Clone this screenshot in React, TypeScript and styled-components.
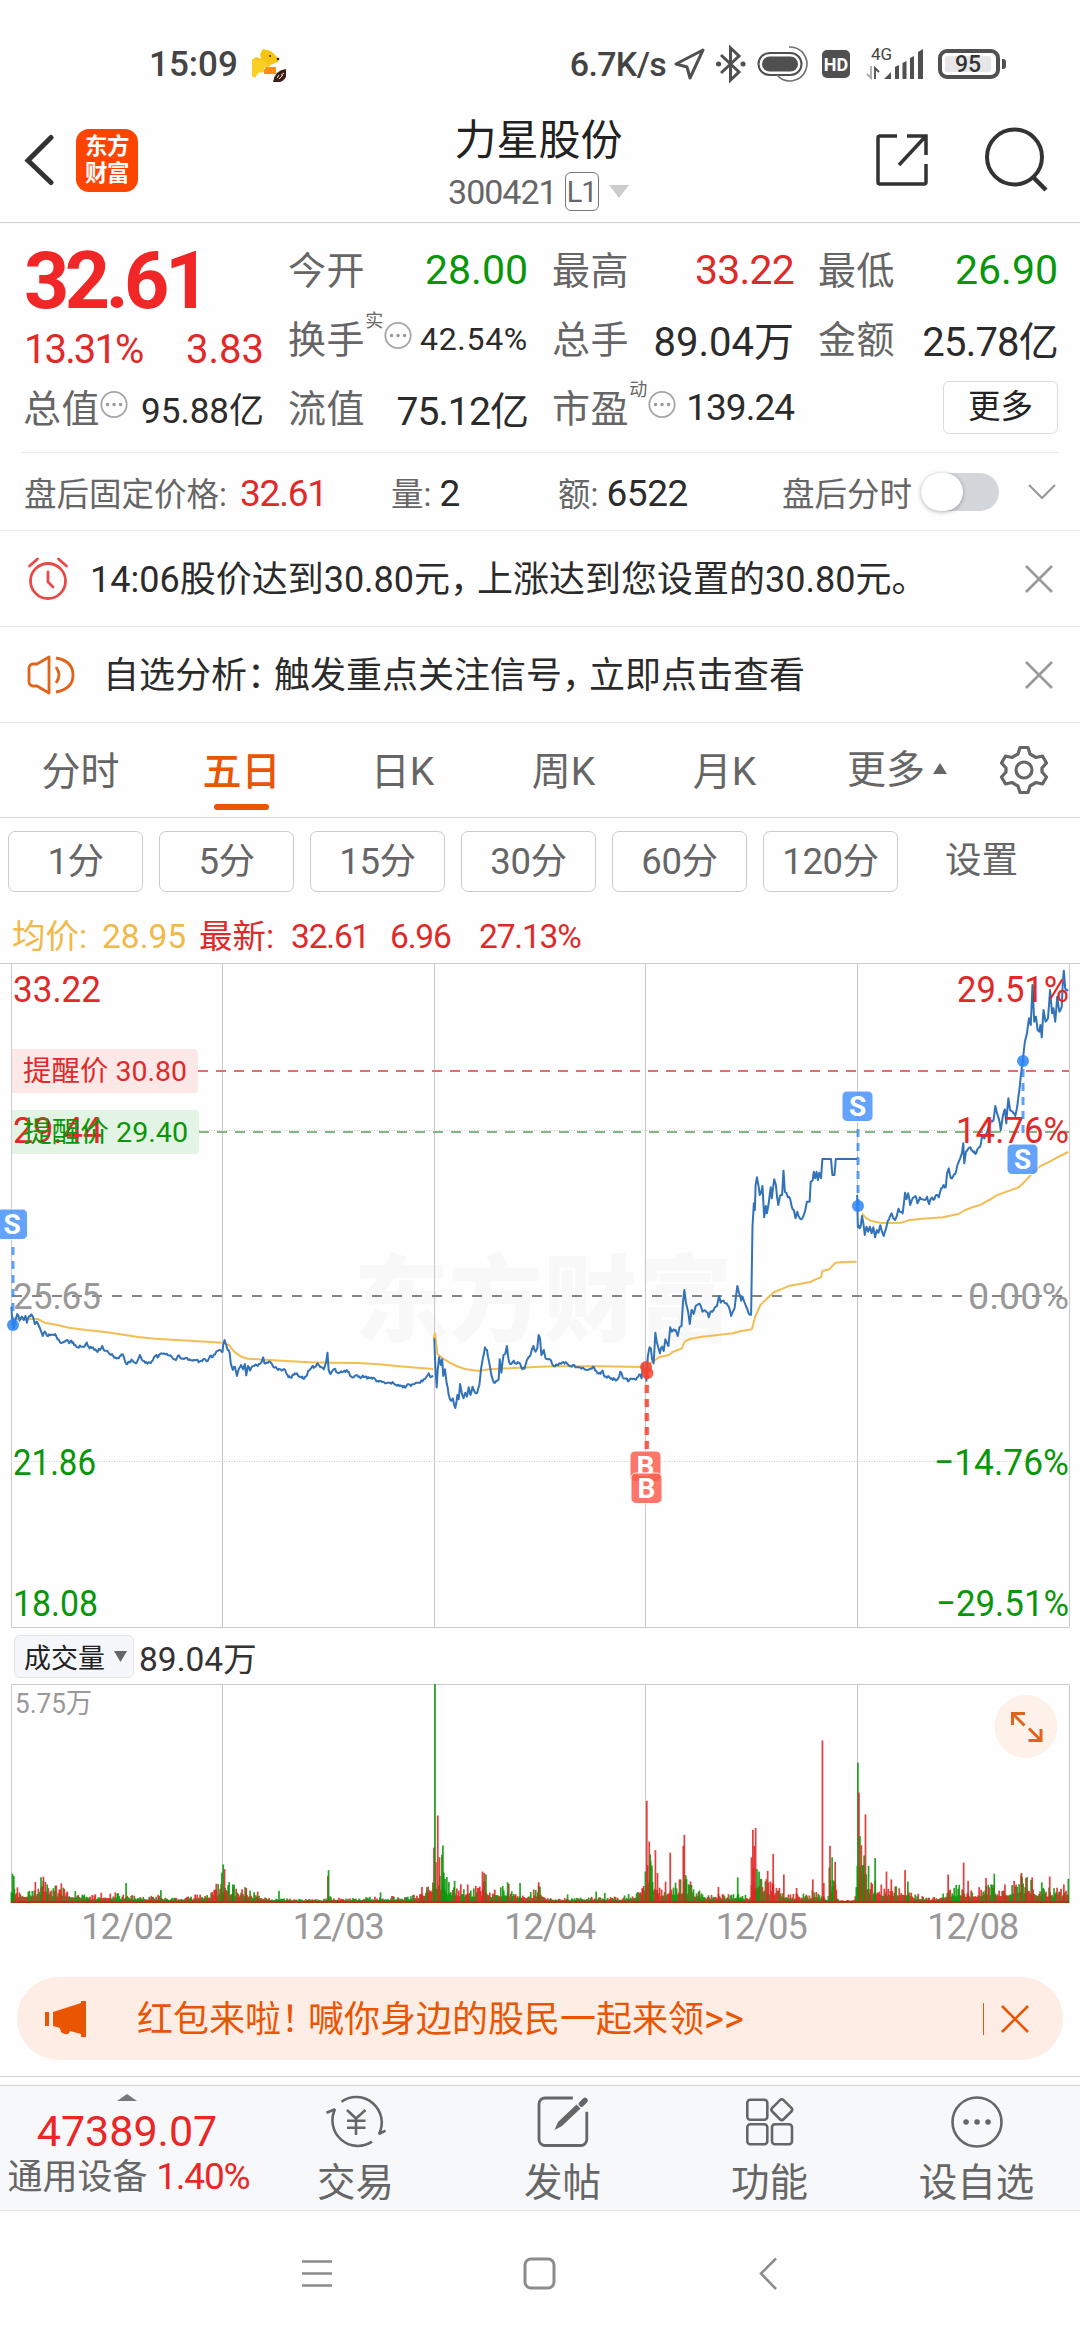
import React from "react";
import styled, { createGlobalStyle } from "styled-components";

type Pt = [number, number];
type Spike = [number, number, "r" | "g"];

const RED = "#e02a2a";
const GREEN = "#0a960a";
const ORANGE = "#ea5504";
const FONT = `Roboto, "Noto Sans CJK SC", sans-serif`;

// "x,y x,y" -> [[x, y], ...]
const parse = (s: string): Pt[] =>
  s
    .trim()
    .split(/\s+/)
    .map((p) => p.split(",").map(Number) as Pt);

const random = (seed: number) => () => {
  seed = (seed * 16807) % 2147483647;
  return seed / 2147483647;
};

// one chart unit is 1/2.904 px across and 1/3 px down, HALF is the middle of the chart
const HALF = 1568;
const shift = (pts: Pt[]): Pt[] => pts.map(([x, y]) => [x + HALF, y]);

const PRICE_DAYS: Pt[][] = [
  parse(`33,1070 35,1105 40,1135 45,1110 50,1092 57,1112 63,1100 69,1110 74,1098 78,1118 85,1098 91,1093 97,1104 101,1122 107,1115 113,1128 118,1140 124,1158 130,1145 136,1157 145,1156 152,1154 160,1152 167,1168 175,1178 185,1176 195,1170 201,1180 207,1172 215,1185 225,1192 235,1190 245,1190 252,1178 260,1195 270,1192 280,1203 290,1200 297,1188 305,1202 315,1208 325,1212 335,1222 345,1225 353,1213 360,1222 367,1242 375,1235 385,1232 392,1238 398,1235 406,1215 415,1232 425,1236 435,1238 443,1232 452,1218 460,1220 468,1210 478,1212 488,1216 498,1220 505,1228 513,1226 520,1216 530,1225 540,1224 550,1228 560,1232 570,1230 580,1234 590,1228 600,1234 610,1218 618,1220 628,1205 636,1200 645,1208`),
  parse(`646,1208 648,1185 652,1170 657,1185 661,1200 667,1210 670,1240 676,1260 682,1250 688,1278 694,1255 700,1245 706,1258 711,1242 715,1276 720,1248 726,1262 735,1248 745,1245 755,1242 760,1235 764,1222 768,1240 778,1238 788,1240 797,1253 807,1260 818,1262 828,1260 835,1275 843,1282 853,1275 862,1270 872,1280 880,1285 888,1280 895,1262 905,1252 914,1250 922,1240 930,1252 940,1258 947,1235 951,1208 954,1258 960,1272 966,1262 973,1256 980,1268 990,1264 1000,1262 1010,1265 1020,1280 1030,1278 1040,1280 1050,1282 1060,1280 1075,1284 1090,1288 1100,1295 1110,1296 1125,1298 1133,1298 1140,1296 1150,1304 1160,1308 1170,1312 1180,1308 1190,1304 1200,1303 1210,1298 1220,1298 1230,1288 1240,1278 1245,1270 1250,1282 1258,1278`),
  [
    ...parse(`1261,1165 1264,1250 1268,1312 1271,1260 1275,1222 1280,1245 1284,1228 1287,1278 1292,1258 1297,1300 1303,1335 1309,1352 1315,1345 1322,1374 1328,1335 1332,1348 1336,1302 1341,1330 1346,1345 1351,1328 1356,1340 1361,1312 1366,1335 1372,1310 1378,1325 1386,1328 1392,1305 1397,1255 1402,1225 1408,1192 1414,1200 1420,1235 1427,1275 1434,1298 1441,1292 1448,1288 1451,1228 1456,1268 1462,1215 1467,1212 1472,1188 1478,1235 1485,1242 1492,1232 1500,1242 1507,1238 1514,1254 1523,1256 1530,1230 1538,1220 1544,1200 1549,1188 1555,1205 1560,1195 1564,1155`),
    ...shift(parse(`0,1165 4,1215 11,1200 16,1225 24,1228 32,1232 40,1248 50,1245 58,1240 68,1236 78,1240 86,1248 95,1245 103,1252 115,1252 130,1258 145,1256 157,1252 167,1270 175,1272 182,1262 188,1280 198,1278 208,1285 220,1292 227,1285 233,1265 240,1282 250,1286 258,1292 266,1286 275,1287 285,1280 292,1275 295,1285 300,1240`)),
  ],
  shift(parse(`307,1265 309,1292 313,1220 318,1192 322,1195 325,1225 330,1240 335,1148 339,1175 344,1195 348,1210 354,1190 359,1203 364,1168 369,1180 373,1188 378,1132 383,1145 388,1138 394,1140 400,1158 405,1132 411,1128 415,1060 419,1020 424,1060 430,1085 435,1122 440,1080 446,1092 452,1068 460,1062 467,1068 472,1085 480,1082 487,1088 490,1102 495,1085 503,1082 508,1072 514,1068 520,1038 525,1058 533,1052 542,1060 548,1070 555,1098 560,1085 565,1075 569,1040 573,1008 578,1030 584,1052 588,1040 593,1055 598,1068 603,1080 609,1094 613,1094 615,960 617,830 621,760 624,780 626,705 630,682 635,710 638,735 642,728 646,708 651,802 656,768 659,790 664,760 670,712 673,745 676,720 680,688 685,705 688,738 692,765 697,738 703,735 707,662 711,725 716,730 720,742 726,745 731,770 737,780 742,805 747,785 753,802 759,808 765,798 770,782 775,755 783,755 786,695 792,690 795,665 799,685 803,665 807,690 811,668 816,685 820,627 845,627 849,675 855,675 859,627 921,627`)),
  shift(parse(`921,735 923,832 931,830 935,798 939,820 943,855 948,830 953,845 958,830 963,850 968,832 973,862 978,840 983,848 988,826 993,845 998,858 1005,835 1010,812 1016,800 1021,790 1026,805 1031,810 1036,798 1041,776 1047,785 1053,790 1060,728 1064,748 1069,730 1075,765 1080,750 1086,742 1090,738 1096,760 1103,742 1110,748 1118,750 1124,740 1130,762 1136,745 1145,748 1152,735 1158,742 1165,715 1172,705 1178,712 1182,670 1187,655 1193,685 1200,678 1208,665 1214,640 1220,625 1225,610 1229,580 1232,640 1237,605 1244,595 1250,592 1256,602 1264,612 1270,598 1278,590 1284,555 1290,565 1297,548 1303,530 1309,515 1317,510 1322,468 1327,490 1332,505 1338,540 1344,498 1350,478 1354,520 1360,445 1365,480 1372,485 1380,498 1386,468 1392,420 1397,370 1402,330 1408,275 1414,250 1420,205 1425,225 1430,105 1435,215 1440,200 1445,240 1450,245 1453,225 1457,262 1462,180 1468,215 1475,205 1481,120 1487,190 1491,175 1496,215 1502,140 1508,185 1515,170 1518,100 1521,62 1525,115 1533,123`)),
];

const AVERAGE_DAYS: Pt[][] = [
  parse(`38,1108 60,1106 110,1107 130,1118 170,1126 200,1133 250,1140 300,1145 350,1153 400,1161 450,1166 500,1169 550,1172 600,1175 645,1178`),
  parse(`650,1180 665,1185 680,1205 700,1220 720,1226 770,1229 830,1233 900,1237 960,1238 1040,1239 1100,1243 1160,1249 1220,1254 1258,1257`),
  [
    ...parse(`1259,1165 1263,1150 1268,1190 1270,1212 1285,1225 1305,1237 1325,1248 1350,1257 1390,1263 1420,1258 1480,1255 1568,1250`),
    ...shift(parse(`52,1249 180,1249 300,1251`)),
  ],
  shift(parse(`313,1252 325,1235 335,1230 345,1222 375,1215 385,1206 412,1195 420,1175 435,1167 470,1160 510,1156 560,1150 580,1144 615,1138 625,1100 640,1065 660,1045 680,1026 705,1016 725,1007 785,996 800,988 816,982 820,963 840,958 858,938 880,936 919,935`)),
  shift(parse(`935,790 945,803 960,812 990,819 1050,818 1070,811 1110,806 1170,802 1190,797 1215,792 1235,780 1260,770 1280,764 1310,747 1325,736 1355,725 1390,712 1410,692 1425,675 1450,650 1480,635 1510,618 1534,606`)),
];

// per-minute ticks between the known points
const ticks = (pts: Pt[], seed: number): string => {
  const rnd = random(seed);
  const out: string[] = [];
  pts.forEach(([x, y], i) => {
    out.push(`${x},${y}`);
    const next = pts[i + 1];
    if (!next || next[1] === y) return;
    const n = Math.floor((next[0] - x) / 2.6);
    for (let k = 1; k < n; k++) {
      const t = k / n;
      const py = y + (next[1] - y) * t + (rnd() - 0.5) * 9;
      out.push(`${(x + (next[0] - x) * t).toFixed(1)},${py.toFixed(1)}`);
    }
  });
  return out.join(" ");
};

const VOLUME_BASE: Pt[] = [
  ...parse(`33,80 50,38 80,40 120,60 150,42 180,48 220,30 260,15 300,28 340,25 366,18 420,15 460,18 480,12 530,10 580,22 620,38 640,50 655,70 670,50 715,38 750,22 800,10 860,8 940,7 960,15 1000,8 1090,14 1150,15 1200,18 1245,46 1260,110 1285,100 1300,60 1340,45 1380,40 1410,60 1430,30 1470,50 1500,35 1540,25 1564,50`),
  ...shift(parse(`4,30 20,14 80,10 180,14 240,14 280,30 305,50 315,130 330,80 350,45 380,60 400,48 420,80 440,50 480,18 520,20 570,25 610,15 615,130 640,80 670,60 700,35 740,22 780,20 800,40 815,22 835,8 840,100 860,40 868,5 915,5 921,200 935,110 960,60 1000,45 1060,55 1090,25 1130,12 1180,28 1220,50 1260,30 1300,60 1350,40 1400,80 1440,45 1480,40 1520,45 1534,60`)),
];

const SPIKES: Spike[] = [
  [36, 82, "g"], [40, 76, "g"], [119, 72, "g"], [126, 74, "r"], [137, 52, "g"], [178, 55, "r"],
  [366, 56, "g"], [467, 36, "g"], [628, 54, "r"], [644, 85, "g"], [648, 108, "g"], [652, 95, "r"],
  [676, 52, "g"], [715, 42, "r"], [748, 32, "r"], [810, 34, "g"], [952, 76, "r"], [954, 92, "g"],
  [1105, 30, "g"], [1225, 45, "r"], [1243, 46, "r"], [1260, 155, "r"], [1271, 245, "r"],
  [1276, 128, "r"], [1283, 135, "g"], [1286, 161, "g"], [1292, 68, "g"], [1320, 62, "g"],
  [1358, 52, "r"], [1401, 88, "r"], [1406, 84, "r"], [1411, 80, "g"], [1474, 58, "g"],
  [1510, 56, "g"], [1564, 58, "r"], [1263, 613, "g"],
  ...([
    [0, 45, "g"], [80, 24, "g"], [163, 32, "g"], [188, 28, "g"], [297, 42, "r"], [306, 88, "g"],
    [310, 286, "r"], [317, 172, "r"], [320, 136, "g"], [325, 105, "g"], [335, 148, "r"],
    [341, 84, "r"], [378, 141, "r"], [405, 66, "r"], [416, 160, "r"], [419, 191, "r"],
    [423, 78, "g"], [463, 35, "g"], [518, 45, "r"], [574, 72, "g"], [614, 128, "r"],
    [618, 205, "r"], [622, 160, "r"], [626, 210, "r"], [630, 95, "g"], [636, 88, "g"],
    [661, 90, "r"], [677, 137, "r"], [708, 80, "r"], [745, 42, "r"], [792, 66, "r"],
    [820, 455, "r"], [824, 56, "r"], [842, 160, "r"], [848, 128, "g"], [857, 115, "r"],
    [923, 393, "g"], [926, 309, "r"], [929, 187, "g"], [933, 162, "r"], [937, 105, "g"],
    [941, 133, "g"], [945, 248, "r"], [954, 104, "g"], [973, 126, "g"], [1006, 88, "r"],
    [1020, 66, "r"], [1060, 92, "r"], [1068, 60, "g"], [1185, 80, "r"], [1230, 113, "r"],
    [1243, 62, "r"], [1295, 70, "r"], [1319, 82, "g"], [1350, 52, "r"], [1398, 84, "r"],
    [1411, 70, "r"], [1429, 72, "r"], [1457, 58, "g"], [1480, 74, "r"], [1521, 52, "r"],
    [1534, 68, "g"],
  ] as Spike[]).map(([x, h, c]) => [x + HALF, h, c] as Spike),
];

const volumeBars = (): Spike[] => {
  const rnd = random(77);
  const bars: Spike[] = [];
  let i = 0;
  for (let x = 33; x < 3103; x += 2.9) {
    while (i < VOLUME_BASE.length - 2 && VOLUME_BASE[i + 1][0] < x) i++;
    const [x0, h0] = VOLUME_BASE[i];
    const [x1, h1] = VOLUME_BASE[i + 1];
    const base = h0 + ((h1 - h0) * (x - x0)) / (x1 - x0);
    const r = rnd();
    bars.push([x, 4 + base * (0.32 + r * r * 0.75), rnd() > 0.5 ? "r" : "g"]);
  }
  return [...bars, ...SPIKES];
};

const DAY_LINES = [222.5, 434.5, 645.5, 857.5];

const PriceChart = () => (
  <ChartSvg width="1080" height="665" viewBox="0 0 1080 665">
    <text x="354" y="371" fontSize="94" fontWeight="900" fill="#f8f8f8" textLength="378">
      东方财富
    </text>
    <path d="M0 .5H1080M11.5 0V664.5H1069.5V0" stroke="#ccc" fill="none" />
    {DAY_LINES.map((x) => (
      <path key={x} d={`M${x} 1V664`} stroke="#c8c8c8" />
    ))}
    <path d="M14 167.5H1069M14 498.5H1069" stroke="#ccc" strokeDasharray="1 1.5" />
    <path d="M198 108H1069" stroke="#e07070" strokeWidth="1.8" strokeDasharray="10 8" />
    <path d="M199 169H1069" stroke="#84b784" strokeWidth="1.8" strokeDasharray="10 8" />
    <path d="M12 333H1069" stroke="#858585" strokeWidth="1.8" strokeDasharray="10 10" />
    <path d="M12 86H194a4 4 0 0 1 4 4V126a4 4 0 0 1-4 4H12z" fill="#fde8e8" />
    <path d="M12 147H195a4 4 0 0 1 4 4V187a4 4 0 0 1-4 4H12z" fill="#e4f4e4" />
    <svg width="1080" height="650" viewBox="0 39 3136 1950" preserveAspectRatio="none">
      {AVERAGE_DAYS.map((d, i) => (
        <Trace key={i} points={d.join(" ")} stroke="#f2bd53" />
      ))}
      {PRICE_DAYS.map((d, i) => (
        <Trace key={i} points={ticks(d, 11 + i)} stroke="#3272b8" />
      ))}
    </svg>
    <AxisLabel x="13" y="39" size={37} w={88} fill={RED}>33.22</AxisLabel>
    <AxisLabel x="13" y="180" size={37} w={90} fill={RED}>29.44</AxisLabel>
    <AxisLabel x="13" y="346" size={37} w={88} fill="#999">25.65</AxisLabel>
    <AxisLabel x="13" y="512" size={37} w={83} fill={GREEN}>21.86</AxisLabel>
    <AxisLabel x="13" y="653" size={37} w={85} fill={GREEN}>18.08</AxisLabel>
    <AxisLabel x="957" y="39" size={37} w={112} fill={RED}>29.51%</AxisLabel>
    <AxisLabel x="956" y="180" size={37} w={113} fill={RED}>14.76%</AxisLabel>
    <AxisLabel x="968" y="346" size={37} w={101} fill="#999">0.00%</AxisLabel>
    <AxisLabel x="934" y="512" size={37} w={135} fill={GREEN}>−14.76%</AxisLabel>
    <AxisLabel x="936" y="653" size={37} w={133} fill={GREEN}>−29.51%</AxisLabel>
    <AxisLabel x="23" y="117.5" size={28} w={164} fill={RED}>提醒价 30.80</AxisLabel>
    <AxisLabel x="23" y="178.5" size={28} w={165} fill={GREEN}>提醒价 29.40</AxisLabel>

    <Marker letter="S" x={12} top={246} dotX={13} dotY={362} />
    <Marker letter="S" x={857.5} top={128} dotX={858} dotY={243} />
    <Marker letter="S" x={1022.5} top={181} dotX={1023} dotY={98} />
    <Marker letter="B" x={645.5} top={488} dotX={646} dotY={404} />
    <Marker letter="B" x={646.5} top={510} dotX={647.5} dotY={410} />
  </ChartSvg>
);

const AxisLabel = (p: { x: string; y: string; size: number; w: number; fill: string; children: string }) => (
  <text x={p.x} y={p.y} fontSize={p.size} fill={p.fill} textLength={p.w} lengthAdjust="spacingAndGlyphs">
    {p.children}
  </text>
);

const Marker = (p: { letter: string; x: number; top: number; dotX: number; dotY: number }) => {
  const sell = p.letter === "S";
  const color = sell ? "#2b83f6" : "#f5432f";
  const fill = sell ? "#4a94fb" : "#ff5f50";
  const from = p.dotY > p.top ? p.top + 38 : p.top - 11;
  return (
    <g>
      <path
        d={`M${p.dotX} ${sell ? from : 486}V${p.dotY}`}
        stroke={color}
        strokeWidth="3"
        strokeDasharray="8 6"
        opacity=".75"
      />
      <circle cx={p.dotX} cy={p.dotY} r="6" fill={color} opacity=".85" />
      <rect x={p.x - 15.5} y={p.top} width="31" height="30.5" rx="5" fill={fill} stroke="#fff" opacity=".85" />
      <text x={p.x} y={p.top + 25} fontSize="28" fontWeight="700" fill="#fff" textAnchor="middle">
        {p.letter}
      </text>
    </g>
  );
};

const VolumeChart = () => (
  <ChartSvg width="1080" height="219" viewBox="0 0 1080 219">
    <path d="M11.5 219V.5H1069.5V219" stroke="#ccc" fill="none" />
    {DAY_LINES.map((x) => (
      <path key={x} d={`M${x} 1V219`} stroke="#c8c8c8" />
    ))}
    <svg width="1080" height="219" viewBox="0 0 3136 613" preserveAspectRatio="none">
      {volumeBars().map(([x, h, c], i) => (
        <rect key={i} x={x - 2.4} y={613 - h} width="5" height={h} fill={c === "r" ? "#e02424" : "#0a960a"} opacity=".88" />
      ))}
    </svg>
    <path d="M11 218H1069" stroke="#b0350f" strokeWidth="2" />
    <text x="15" y="29" fontSize="28" fill="#999" textLength="77" lengthAdjust="spacingAndGlyphs">
      5.75万
    </text>
    <circle cx="1026" cy="42.500" r="31.500" fill="#fef1ea" />
    <path d="M1012.500 41V29.500H1025M1013 30l11.500 11.500M1041 45V56.500H1028.500M1040.500 56L1029 44.500" stroke="#e2641c" strokeWidth="3" fill="none" />
  </ChartSvg>
);

const Dots = () => (
  <svg width="28" height="29" viewBox="0 0 28 29">
    <circle cx="14" cy="14.500" r="12.700" fill="none" stroke="#a6a6a6" strokeWidth="1.800" />
    <path d="M7.500 14.500h.1M14 14.500h.1M20.500 14.500h.1" stroke="#999" strokeWidth="3.400" strokeLinecap="round" />
  </svg>
);

const Close = ({ color = "#999" }: { color?: string }) => (
  <svg width="30" height="30" viewBox="0 0 30 30">
    <path d="M2 2L28 28M28 2L2 28" stroke={color} strokeWidth="2.600" />
  </svg>
);

const StatusBar = () => (
  <Status>
    <Clock>15:09</Clock>
    <svg width="34" height="35" viewBox="0 0 34 35">
      <path d="M8 7l3-5 8 2 8 8-1 3-8 3H8L0 13l4-3 5 2z" fill="#f6c512" />
      <path d="M0 12l12 2 7 5-7 2v4l-6 1-3 5-3-2z" fill="#f9cf25" />
      <path d="M14 20h10v7H12v-4z" fill="#fb8c14" />
      <circle cx="26" cy="12" r="1.300" fill="#222" />
      <path d="M17 9h2" stroke="#333" strokeWidth="1.500" />
      <path d="M21 35q2-12 13-13v8q-3 5-7 5z" fill="#3d1d16" />
      <path d="M25 31l2-3M29 28l3-2M27 32l4-4" stroke="#eee" />
    </svg>
    <Speed>6.7K/s</Speed>
    <svg width="31" height="32" viewBox="0 0 31 32">
      <path d="M29 2L2 16l11 3 3 11z" fill="none" stroke="#505050" strokeWidth="3" strokeLinejoin="round" />
    </svg>
    <StatusIcon $left={11} width="30" height="36" viewBox="0 0 30 36">
      <path d="M5 9l18 17-8.500 8V2L23 10 5 27" fill="none" stroke="#505050" strokeWidth="3" />
      <path d="M2.500 18h.1M27 18h.1" stroke="#505050" strokeWidth="5" strokeLinecap="round" />
    </StatusIcon>
    <StatusIcon $left={11} width="50" height="38" viewBox="0 0 50 38">
      <rect x="1.500" y="8" width="43" height="22" rx="11" fill="none" stroke="#505050" strokeWidth="2" />
      <rect x="5" y="11.500" width="36" height="15" rx="7.500" fill="#505050" />
      <path d="M32 2a17 17 0 1 1-12 28q5 6 13 6" fill="none" stroke="#707070" strokeWidth="1.600" />
    </StatusIcon>
    <Hd>HD</Hd>
    <StatusIcon $left={16} width="58" height="36" viewBox="0 0 58 36">
      <text x="5" y="14" fontSize="17" fill="#444" textLength="21">4G</text>
      <path d="M5 20v12l-4-4" stroke="#aaa" strokeWidth="1.800" fill="none" />
      <path d="M9 33V22l4 4" stroke="#505050" strokeWidth="1.800" fill="none" />
      <path d="M18 33l7-7v7zM29 21l4-2v14h-4zM36.500 17l4-2v18h-4zM44 12l4-2v23h-4zM52 6l5-3v30h-5z" fill="#505050" />
    </StatusIcon>
    <Battery>
      <i>95</i>
    </Battery>
  </Status>
);

const tabs = ["分时", "五日", "日K", "周K", "月K"];
const periods = ["1分", "5分", "15分", "30分", "60分", "120分"];
const dates = ["12/02", "12/03", "12/04", "12/05", "12/08"];

export default function App() {
  return (
    <Page>
      <GlobalStyle />
      <StatusBar />

      <Header>
        <svg width="32" height="52" viewBox="0 0 32 52">
          <path d="M27 3.500L4 26.500 27 48.500" fill="none" stroke="#333" strokeWidth="5" strokeLinecap="round" />
        </svg>
        <Logo>
          <span>东方</span>
          <span>财富</span>
        </Logo>
        <TitleBox>
          <Name>力星股份</Name>
          <Code>
            300421<Level>L1</Level>
            <svg width="20" height="13" viewBox="0 0 20 13">
              <path d="M0 0H20L10 13z" fill="#ccc" />
            </svg>
          </Code>
        </TitleBox>
        <svg width="54" height="54" viewBox="0 0 54 54" fill="none" stroke="#333" strokeWidth="3.500">
          <path d="M22 3H5a2 2 0 0 0-2 2V49a2 2 0 0 0 2 2H49a2 2 0 0 0 2-2V31M32 3H51V22M50 4L24 32" />
        </svg>
        <SearchIcon width="64" height="66" viewBox="0 0 64 66" fill="none" stroke="#333" strokeWidth="4">
          <ellipse cx="29.500" cy="30" rx="27.500" ry="27.500" />
          <path d="M48 50L61 63" strokeWidth="4.500" />
        </SearchIcon>
      </Header>

      <Quote>
        <Main>
          <Price>32.61</Price>
          <Change>
            <span>13.31%</span>
            <Value $c={RED} $size={40}>3.83</Value>
          </Change>
        </Main>
        <Cell><Label>今开</Label><Value $c={GREEN}>28.00</Value></Cell>
        <Cell><Label>最高</Label><Value $c={RED} $ls={-0.8}>33.22</Value></Cell>
        <Cell><Label>最低</Label><Value $c={GREEN}>26.90</Value></Cell>
        <Cell>
          <Label>换手<Sup>实</Sup><Dots /></Label>
          <Value $size={32} $ls={0.7}>42.54%</Value>
        </Cell>
        <Cell><Label>总手</Label><Value $size={40}>89.04万</Value></Cell>
        <Cell><Label>金额</Label><Value $size={40} $ls={-0.8}>25.78亿</Value></Cell>
        <Cell>
          <Label>总值<Dots /></Label>
          <Value $size={35}>95.88亿</Value>
        </Cell>
        <Cell><Label>流值</Label><Value $size={39} $ls={-0.9}>75.12亿</Value></Cell>
        <Cell>
          <Label>市盈<Sup>动</Sup><Dots /></Label>
          <Value $size={37} $ls={-1}>139.24</Value>
        </Cell>
        <Cell><More>更多</More></Cell>
      </Quote>

      <AfterHours>
        <Fixed>盘后固定价格: <Value $c={RED} $size={37} $ls={-1.2}>32.61</Value></Fixed>
        <span>量: <Value $size={37}>2</Value></span>
        <span>额: <Value $size={37} $ls={-0.4}>6522</Value></span>
        <span>盘后分时</span>
        <Switch />
        <svg width="28" height="18" viewBox="0 0 28 18">
          <path d="M1 2L14 15 27 2" fill="none" stroke="#999" strokeWidth="2.200" />
        </svg>
      </AfterHours>

      <Notice>
        <svg width="42" height="44" viewBox="0 0 42 44" fill="none" stroke="#e84a4a" strokeWidth="2.800" strokeLinecap="round">
          <circle cx="21" cy="24" r="17.500" />
          <path d="M21 15v10l5 5M2.500 9l8-7M39.500 9l-8-7" />
        </svg>
        <NoticeText $left={21}>14:06股价达到30.80元<Mark>，</Mark>上涨达到您设置的30.80元。</NoticeText>
        <Close />
      </Notice>
      <Notice>
        <svg width="48" height="40" viewBox="0 0 48 40" fill="none" stroke="#e0651c" strokeWidth="2.800" strokeLinejoin="round">
          <path d="M10 9L22 2V38L10 31H6a4 4 0 0 1-4-4V13a4 4 0 0 1 4-4zM22 2V38" />
          <path d="M29 12q6 8 0 16M29 3q17 3 17 17T29 37" />
        </svg>
        <NoticeText $left={28}>自选分析<Mark>：</Mark>触发重点关注信号<Mark>，</Mark>立即点击查看</NoticeText>
        <Close />
      </Notice>

      <Tabs>
        {tabs.map((t) => (
          <Tab key={t} $active={t === "五日"}>{t}</Tab>
        ))}
        <MoreTab>
          更多
          <svg width="14" height="11" viewBox="0 0 14 11">
            <path d="M7 0L14 11H0z" fill="#666" />
          </svg>
        </MoreTab>
        <svg width="50" height="50" viewBox="0 0 50 50" fill="none" stroke="#666" strokeWidth="3.200" strokeLinejoin="round">
          <path d="M21 2.500h8l2 6.500 6 3.500 6.500-1.500 4 7-4.500 5v4l4.500 5-4 7-6.500-1.500-6 3.500-2 6.500h-8l-2-6.500-6-3.500-6.500 1.500-4-7 4.500-5v-4l-4.500-5 4-7 6.500 1.500 6-3.500z" />
          <circle cx="25" cy="25" r="8" />
        </svg>
      </Tabs>

      <Periods>
        {periods.map((p) => (
          <Period key={p}>{p}</Period>
        ))}
        <Setup>设置</Setup>
      </Periods>

      <Legend>
        <Amber>均价:</Amber>
        <Amber>28.95</Amber>
        <span>最新:</span>
        <Tight>32.61</Tight>
        <Tight>6.96</Tight>
        <Tight>27.13%</Tight>
      </Legend>

      <PriceChart />
      <VolumeHead>
        <Select>
          成交量
          <svg width="13" height="11" viewBox="0 0 13 11">
            <path d="M0 0H13L6.500 11z" fill="#666" />
          </svg>
        </Select>
        89.04万
      </VolumeHead>
      <VolumeChart />
      <Dates>
        {dates.map((d) => (
          <span key={d}>{d}</span>
        ))}
      </Dates>

      <Banner>
        <svg width="42" height="38" viewBox="0 0 42 38" fill={ORANGE}>
          <path d="M0 12h4v14H0zM8 12L36 3V1h5V37h-5v-3l-11-3q-1 4-5 3l-3-1q-2-2-2-5l-7-2z" />
        </svg>
        <BannerText>红包来啦<Mark>！</Mark>喊你身边的股民一起来领<b>&gt;&gt;</b></BannerText>
        <Divider />
        <Close color={ORANGE} />
      </Banner>

      <BottomBar>
        <Sector>
          <svg width="20" height="7" viewBox="0 0 20 7">
            <path d="M10 0L20 7H0z" fill="#777" />
          </svg>
          <IndexValue>47389.07</IndexValue>
          <SectorName>通用设备 <b>1.40%</b></SectorName>
        </Sector>
        <Action>
          <svg width="62" height="56" viewBox="0 0 62 56" fill="none" stroke="#666" strokeWidth="2.600">
            <path d="M16.500 8.700A25.500 25.500 0 0 1 54 41l6.500-3.300M47 48.700A25.500 25.500 0 0 1 10 16.300l-8.500 3.400" strokeLinejoin="bevel" />
            <path d="M22 17l9 8.500 9.500-8.500M31 25.500V42M22 27.700H40.500M22 34.700H40.500" />
          </svg>
          交易
        </Action>
        <Action>
          <svg width="54" height="56" viewBox="0 0 54 56" fill="none" stroke="#666" strokeWidth="2.800">
            <path d="M36.800 5H9a6 6 0 0 0-6 6V46.500a6 6 0 0 0 6 6H44.800a6 6 0 0 0 6-6V18.700" />
            <path d="M18.500 37l3.500-8L40.500 11.500l4 4L26 33z" fill="#666" stroke="none" />
            <path d="M45.500 11l3.500-3.500" strokeWidth="5.500" strokeLinecap="round" />
          </svg>
          发帖
        </Action>
        <Action>
          <svg width="50" height="56" viewBox="0 0 50 56" fill="none" stroke="#666" strokeWidth="2.600">
            <rect x="2.300" y="6.700" width="20" height="20" rx="3" />
            <rect x="2.300" y="31.300" width="20" height="20" rx="3" />
            <rect x="27" y="31.300" width="20" height="20" rx="3" />
            <rect x="28.800" y="8.700" width="16" height="16" rx="2.500" transform="rotate(45 36.800 16.700)" />
          </svg>
          功能
        </Action>
        <Action>
          <svg width="54" height="56" viewBox="0 0 54 56" fill="none" stroke="#666" strokeWidth="2.600">
            <circle cx="27" cy="29" r="24.500" />
            <path d="M16 29h.1M27 29h.1M38 29h.1" strokeWidth="5.500" strokeLinecap="round" />
          </svg>
          设自选
        </Action>
      </BottomBar>

      <SystemNav>
        <svg width="32" height="32" viewBox="0 0 32 32" stroke="#8c8c8c" strokeWidth="2.600">
          <path d="M1 3.500H31M1 15.500H31M1 27.500H31" />
        </svg>
        <svg width="34" height="34" viewBox="0 0 34 34" fill="none" stroke="#8c8c8c" strokeWidth="3">
          <rect x="2" y="2" width="29" height="29" rx="6" />
        </svg>
        <svg width="20" height="34" viewBox="0 0 20 34" fill="none" stroke="#8c8c8c" strokeWidth="2.600">
          <path d="M18 1.500L3 16.500 18 32" />
        </svg>
      </SystemNav>
    </Page>
  );
}

const GlobalStyle = createGlobalStyle`
  body {
    margin: 0;
    background: #fefefe;
    font-family: ${FONT};
  }
  * {
    box-sizing: border-box;
  }
  svg {
    flex-shrink: 0;
  }
`;

const Page = styled.div`
  width: 1080px;
  height: 2340px;
  display: flex;
  flex-direction: column;
  overflow: hidden;
  background: #fefefe;
  color: #333;
  white-space: nowrap;
`;

const Status = styled.div`
  height: 110px;
  padding: 18px 74px 0 149px;
  display: flex;
  align-items: center;
  color: #444;
`;
const Clock = styled.div`
  width: 103px;
  font-size: 35px;
  font-weight: 500;
`;
const Speed = styled.div`
  margin-left: auto;
  margin-right: 8px;
  font-size: 34px;
  font-weight: 500;
  letter-spacing: -0.7px;
`;
const StatusIcon = styled.svg<{ $left: number }>`
  margin-left: ${(p) => p.$left}px;
  overflow: visible;
`;
const Hd = styled.div`
  width: 28px;
  height: 28px;
  margin-left: 15px;
  border-radius: 5px;
  background: #505050;
  color: #fff;
  font-size: 18px;
  font-weight: 700;
  line-height: 29px;
  text-align: center;
`;
const Battery = styled.div`
  position: relative;
  width: 62px;
  height: 30px;
  margin-left: 14px;
  margin-right: 6px;
  padding: 3px;
  border: 4px solid #505050;
  border-radius: 9px;
  i {
    display: block;
    width: 46px;
    height: 16px;
    border-radius: 3px;
    background: #e6e6e6;
    color: #333;
    font-style: normal;
    font-weight: 500;
    font-size: 23px;
    line-height: 17px;
    text-align: center;
  }
  &::after {
    content: "";
    position: absolute;
    right: -10px;
    top: 6px;
    width: 4px;
    height: 10px;
    border-radius: 0 3px 3px 0;
    background: #505050;
  }
`;

const Header = styled.div`
  height: 113px;
  padding-left: 24px;
  padding-right: 31px;
  border-bottom: 1px solid #d0d0d0;
  display: flex;
  align-items: center;
  padding-bottom: 12px;
`;
const Logo = styled.div`
  width: 62px;
  height: 63px;
  margin-left: 20px;
  border-radius: 13px;
  background: #fd4400;
  color: #fff;
  font-size: 22.5px;
  font-weight: 700;
  line-height: 27px;
  letter-spacing: -0.5px;
  display: flex;
  flex-direction: column;
  align-items: center;
  justify-content: center;
`;
const TitleBox = styled.div`
  width: 200px;
  margin-left: 301px;
  margin-right: 237px;
  padding-top: 7px;
  display: flex;
  flex-direction: column;
  align-items: center;
`;
const Name = styled.div`
  font-size: 42px;
  line-height: 56px;
  color: #222;
`;
const Code = styled.div`
  height: 46px;
  display: flex;
  align-items: center;
  font-size: 34px;
  letter-spacing: -1px;
  color: #666;
  svg {
    margin-left: 10px;
  }
`;
const Level = styled.span`
  width: 34px;
  height: 39px;
  margin-left: 8px;
  border: 1px solid #777;
  border-radius: 6px;
  font-size: 29px;
  line-height: 38px;
  text-align: center;
`;
const SearchIcon = styled.svg`
  margin-left: 56px;
`;

const Quote = styled.div`
  height: 230px;
  margin: 0 22px;
  padding: 12px 0 0 2px;
  border-bottom: 1px solid #e8e8e8;
  display: grid;
  grid-template-columns: 240px 239px 241px 239px;
  grid-template-rows: repeat(3, 69px);
  column-gap: 25px;
`;
const Main = styled.div`
  grid-row: span 2;
`;
const Price = styled.div`
  height: 91px;
  line-height: 93px;
  font-size: 79px;
  font-weight: 700;
  letter-spacing: -4.5px;
  color: #f12626;
`;
const Change = styled.div`
  height: 47px;
  line-height: 47px;
  display: flex;
  justify-content: space-between;
  color: ${RED};
  font-size: 40px;
  letter-spacing: -1.9px;
`;
const Cell = styled.div`
  display: flex;
  align-items: center;
  justify-content: space-between;
`;
const Label = styled.span`
  display: flex;
  align-items: center;
  margin-left: -1px;
  padding-bottom: 5px;
  font-size: 38px;
  letter-spacing: 0.5px;
  color: #666;
  svg {
    margin-top: -1px;
  }
`;
const Sup = styled.sup`
  align-self: flex-start;
  width: 19px;
  font-size: 18px;
  line-height: 24px;
  text-align: center;
`;
const Value = styled.span<{ $c?: string; $size?: number; $ls?: number }>`
  color: ${(p) => p.$c || "#2b2b2b"};
  font-size: ${(p) => p.$size || 41}px;
  letter-spacing: ${(p) => p.$ls || 0}px;
`;
const More = styled.div`
  width: 115px;
  height: 53px;
  margin-left: auto;
  border: 1px solid #ddd;
  border-radius: 6px;
  font-size: 32.5px;
  line-height: 51px;
  text-align: center;
  color: #222;
`;

const AfterHours = styled.div`
  height: 78px;
  padding-left: 24px;
  border-bottom: 1px solid #ececec;
  display: grid;
  grid-template-columns: 367px 167px 224px 139px 107px auto;
  align-items: center;
  font-size: 32.5px;
  color: #666;
`;
const Fixed = styled.span`
  word-spacing: 5px;
`;
const Switch = styled.div`
  width: 78px;
  height: 38px;
  border-radius: 19px;
  background: #d3d6db;
  &::before {
    content: "";
    display: block;
    width: 42px;
    height: 38px;
    border-radius: 21px;
    background: #fff;
    box-shadow: 0 1px 4px rgba(0, 0, 0, 0.3);
  }
`;

const Notice = styled.div`
  height: 96px;
  padding: 0 26px 0 27px;
  border-bottom: 1px solid #e4e4e4;
  display: flex;
  align-items: center;
`;
const NoticeText = styled.div<{ $left: number }>`
  flex: 1;
  margin-left: ${(p) => p.$left}px;
  padding-bottom: 6px;
  font-size: 36px;
  color: #2b2b2b;
`;
const Mark = styled.span`
  margin-right: -9px;
`;

const Tabs = styled.div`
  height: 95px;
  border-bottom: 1px solid #d4d4d4;
  display: flex;
  align-items: center;
  font-size: 39px;
  color: #666;
`;
const Tab = styled.div<{ $active: boolean }>`
  width: 161px;
  height: 94px;
  line-height: 98px;
  text-align: center;
  ${(p) =>
    p.$active &&
    `
    color: ${ORANGE};
    font-weight: 500;
    &::after {
      content: "";
      display: block;
      width: 55px;
      height: 6px;
      margin: -17px auto 0;
      border-radius: 3px;
      background: ${ORANGE};
    }
  `}
`;
const MoreTab = styled.div`
  width: 194px;
  padding-left: 42px;
  line-height: 98px;
  svg {
    margin-left: 8px;
    vertical-align: 9px;
  }
`;

const Periods = styled.div`
  padding: 13px 0 0 8px;
  display: flex;
  gap: 16px;
  color: #666;
`;
const Period = styled.div`
  width: 135px;
  height: 61px;
  border: 1px solid #ccc;
  border-radius: 7px;
  font-size: 36.5px;
  line-height: 60px;
  letter-spacing: -0.4px;
  text-align: center;
`;
const Setup = styled.div`
  margin-left: 31px;
  font-size: 36.5px;
  line-height: 60px;
`;

const Legend = styled.div`
  height: 71px;
  padding: 18px 0 0 12px;
  display: grid;
  grid-template-columns: 90px 97px 92px 99px 89px auto;
  line-height: 53px;
  font-size: 33.5px;
  color: ${RED};
`;
const Amber = styled.span`
  color: #f1b94a;
`;
const Tight = styled.span`
  letter-spacing: -1.2px;
`;

const ChartSvg = styled.svg`
  display: block;
  font-family: ${FONT};
`;
const Trace = styled.polyline`
  fill: none;
  stroke-width: 2;
  stroke-linejoin: round;
  vector-effect: non-scaling-stroke;
`;

const VolumeHead = styled.div`
  height: 56px;
  padding-left: 14px;
  display: flex;
  align-items: center;
  gap: 5px;
  font-size: 33.5px;
`;
const Select = styled.div`
  width: 120px;
  height: 43px;
  padding-left: 9px;
  display: flex;
  align-items: center;
  gap: 9px;
  border: 1px solid #e2e4e8;
  border-radius: 6px;
  background: #f6f7fa;
  font-size: 27px;
  color: #222;
`;
const Dates = styled.div`
  height: 48px;
  padding: 0 10px 0 21px;
  display: grid;
  grid-template-columns: repeat(5, 211.5px);
  font-size: 36px;
  line-height: 49px;
  letter-spacing: -1px;
  text-align: center;
  color: #999;
`;

const Banner = styled.div`
  height: 83px;
  flex-shrink: 0;
  margin: 26px 17px 16px;
  padding: 0 33px 0 28px;
  border-radius: 42px;
  background: #fdede4;
  display: flex;
  align-items: center;
  color: ${ORANGE};
`;
const BannerText = styled.div`
  flex: 1;
  margin-left: 50px;
  padding-bottom: 6px;
  font-size: 36px;
  b {
    font-weight: 400;
    font-size: 38px;
  }
`;
const Divider = styled.div`
  width: 1px;
  height: 32px;
  margin-right: 16px;
  background: ${ORANGE};
`;

const BottomBar = styled.div`
  height: 135px;
  flex-shrink: 0;
  border-top: 1px solid #d4d4d4;
  border-bottom: 1px solid #e2e2e2;
  display: flex;
  background: linear-gradient(#fefefe 8px, #d4d4d4 8px, #d4d4d4 9px, #f7f8fa 9px);
`;
const Sector = styled.div`
  width: 254px;
  margin-right: -2px;
  padding-top: 17px;
  display: flex;
  flex-direction: column;
  align-items: center;
`;
const IndexValue = styled.div`
  margin-top: 7px;
  font-size: 43px;
  line-height: 46px;
  color: #e92727;
`;
const SectorName = styled.div`
  margin-left: 3px;
  font-size: 35px;
  line-height: 46px;
  color: #666;
  b {
    font-weight: 400;
    font-size: 37px;
    letter-spacing: -1.2px;
    color: #e92727;
  }
`;
const Action = styled.div`
  width: 207px;
  padding-top: 16px;
  display: flex;
  flex-direction: column;
  align-items: center;
  font-size: 38.5px;
  line-height: 68px;
  color: #666;
`;

const SystemNav = styled.div`
  flex: 1;
  padding: 0 0 3px 301px;
  display: grid;
  grid-template-columns: 222px 235px auto;
  align-items: center;
`;
